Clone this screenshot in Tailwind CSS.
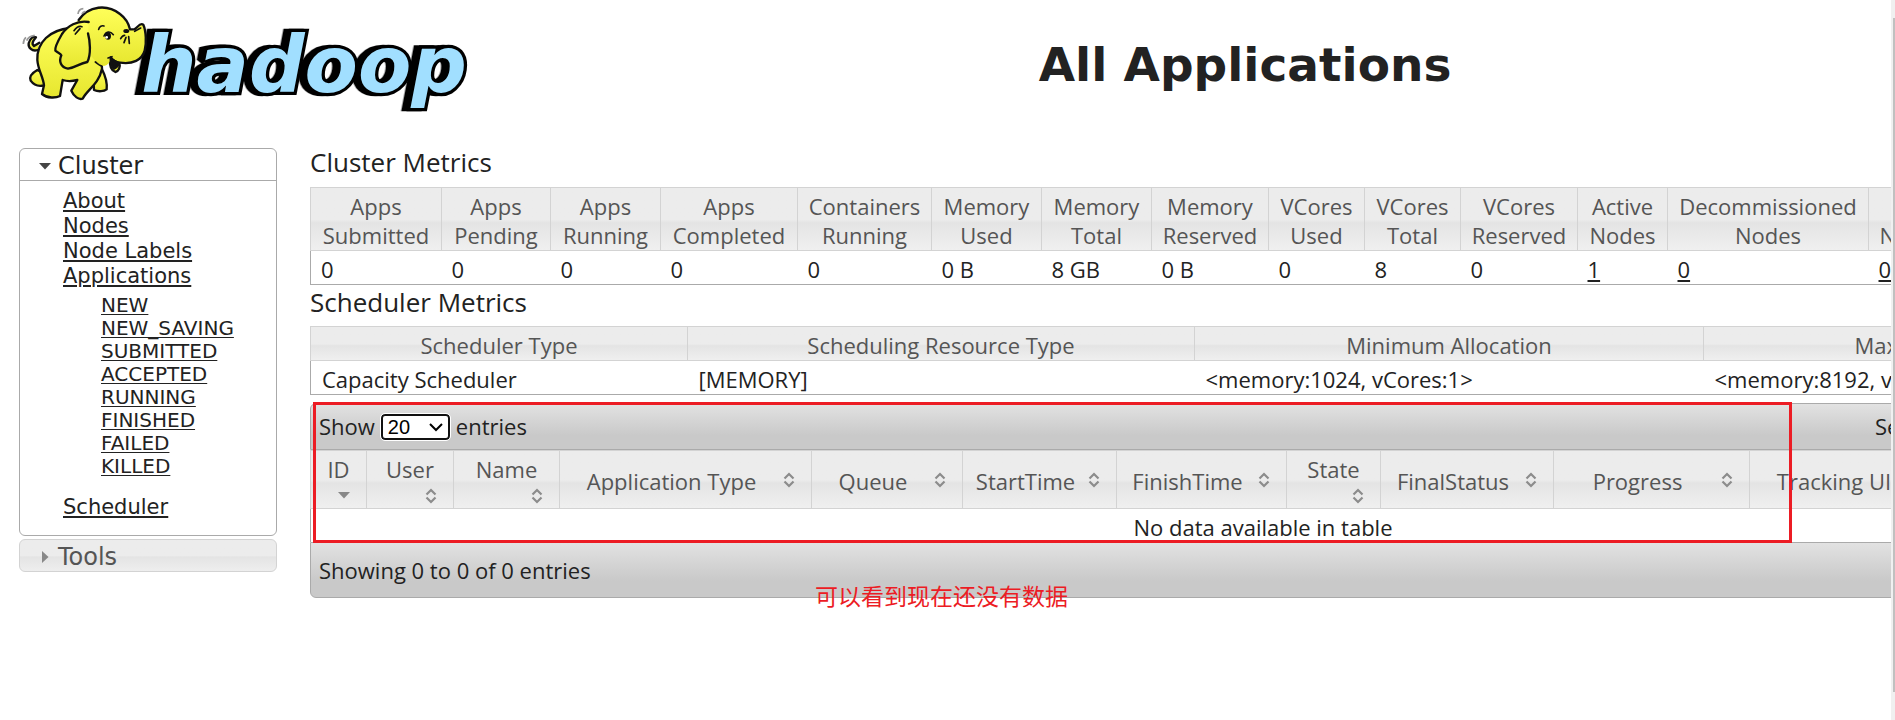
<!DOCTYPE html>
<html lang="en">
<head>
<meta charset="utf-8">
<title>All Applications</title>
<script src="https://cdn.jsdelivr.net/npm/@tailwindcss/browser@4"></script>
</head>
<body class="min-h-screen overflow-x-hidden bg-white text-[#222222] font-['Open_Sans','Noto_Sans_CJK_SC',sans-serif] text-[22px] leading-[29px]">
<svg class="hidden" aria-hidden="true">
  <symbol id="sort" viewBox="0 0 12 16"><path d="M1.500 6.500 6 2 10.500 6.500M1.500 9.500 6 14 10.500 9.500" fill="none" stroke="#8c8c8c" stroke-width="2.200"/></symbol>
  <symbol id="down" viewBox="0 0 12 8"><path d="M0 1H12L6 7.500Z" fill="currentColor"/></symbol>
</svg>
<div class="fixed inset-y-0 right-0 z-20 flex w-1 justify-end bg-[#f0f0f0] pt-[18px] pb-7"><div class="w-[2px] bg-[#c0c0c0]"></div></div>

<header class="flex h-[130px] w-[2216px] items-center">
  <a href="#" class="block w-[480px] shrink-0" aria-label="hadoop">
    <svg class="h-[130px] w-[480px]" viewBox="0 0 1440 390">
      <defs><linearGradient id="skin" x1="0" y1="0" x2="0" y2="1"><stop offset="0" stop-color="#ffff5a"/><stop offset="1" stop-color="#e6e62e"/></linearGradient></defs>
      <text class="drop-shadow-[-16px_0_0_#000000]" x="424" y="277" font-family="DejaVu Sans" font-weight="700" font-style="italic" font-size="233" fill="#a1dfff" stroke="#000" stroke-width="20" stroke-linejoin="miter" stroke-miterlimit="2" paint-order="stroke">hadoop</text>
      <g stroke="#111" stroke-width="7" stroke-linejoin="round" stroke-linecap="round" fill="url(#skin)">
        <path d="M113 150C96 156 84 142 86 130C90 114 100 108 108 112C98 124 94 132 102 138L118 128"/>
        <path d="M112 210C98 218 86 228 92 242C102 256 116 260 132 256L136 222Z"/>
        <path d="M280 230L282 270C296 276 312 274 320 268C322 250 318 232 306 208Z"/>
        <path d="M210 84C150 90 110 126 112 180C114 210 130 232 132 256L126 282C142 296 168 294 180 288L188 240C200 244 216 244 232 240L214 272C222 290 236 300 248 296C262 268 296 254 306 206L300 110Z"/>
        <path d="M330 176C328 200 334 212 346 216C356 214 362 202 358 188Z"/>
        <path d="M236 60C266 16 322 12 360 42C376 54 386 70 390 88L402 88C412 86 418 66 430 74C438 92 440 130 434 152C426 180 398 194 360 188C346 186 338 180 332 172C332 186 324 196 312 198C296 194 282 182 272 164L216 76Z" stroke="none"/>
        <path d="M236 60C266 16 322 12 360 42C376 54 386 70 390 88L402 88C412 86 418 66 430 74C438 92 440 130 434 152C426 180 398 194 360 188C346 186 338 180 332 172" fill="none"/>
        <path d="M332 176C332 192 336 200 342 206C350 202 356 196 356 190Z" fill="#111"/>
        <path d="M324 174 336 170M286 186C294 192 298 196 304 198" fill="none" stroke-width="5"/>
        <path d="M266 66C232 60 202 78 186 102C172 126 164 144 166 152C176 160 182 160 184 166C176 184 182 202 204 206C228 202 238 190 262 186C274 162 270 122 264 100"/>
        <path d="M296 88C298 78 306 76 312 78M312 108C318 94 330 92 340 104M362 116C366 108 370 106 374 106M372 128 378 112M388 130 386 110M404 94 422 84" fill="none" stroke-width="5"/>
        <ellipse cx="324" cy="108" rx="9" ry="11" fill="#111" stroke="none"/>
        <ellipse cx="379" cy="93" rx="9" ry="6" fill="#111" stroke="none"/>
        <circle cx="320" cy="112" r="4" fill="#fff" stroke="none"/>
        <path d="M222 92C230 80 240 78 246 80M226 102 240 86" fill="none" stroke-width="5"/>
      </g>
      <path d="M234 42Q236 26 250 26M246 42Q248 36 256 34M70 132Q70 118 78 112M80 122Q86 108 104 106" fill="none" stroke="#999" stroke-width="5"/>
    </svg>
  </a>
  <h1 class="w-[1530px] text-center font-['DejaVu_Sans',sans-serif] text-[47px] leading-[60px] font-bold">All Applications</h1>
</header>

<div class="flex w-[2216px] items-start gap-[33px] pt-[18px] pl-[19px]">
  <nav class="flex w-[258px] shrink-0 flex-col gap-[3px] font-['DejaVu_Sans',sans-serif]">
    <section class="h-[388px] rounded-md border border-[#aaaaaa]">
      <h3 class="border-b border-[#aaaaaa]"><button class="flex h-[31px] w-full items-center gap-[7px] pt-[2px] pl-[19px] text-[24px] leading-[32px]"><svg class="h-2 w-3 text-[#454545]"><use href="#down"/></svg>Cluster</button></h3>
      <ul class="pt-2 pl-[43px] text-[21px] leading-[25px] underline decoration-2 underline-offset-2">
        <li><a href="#">About</a></li>
        <li><a href="#">Nodes</a></li>
        <li><a href="#">Node Labels</a></li>
        <li><a href="#">Applications</a></li>
      </ul>
      <ul class="pt-[5px] pl-[81px] text-[20px] leading-[23px] underline decoration-1 underline-offset-2">
        <li><a href="#">NEW</a></li>
        <li><a href="#">NEW_SAVING</a></li>
        <li><a href="#">SUBMITTED</a></li>
        <li><a href="#">ACCEPTED</a></li>
        <li><a href="#">RUNNING</a></li>
        <li><a href="#">FINISHED</a></li>
        <li><a href="#">FAILED</a></li>
        <li><a href="#">KILLED</a></li>
      </ul>
      <p class="pt-[17px] pl-[43px] text-[21px] leading-[25px] underline decoration-2 underline-offset-2"><a href="#">Scheduler</a></p>
    </section>
    <h3><button class="flex h-[33px] w-full items-center gap-[7px] rounded-md border border-[#d3d3d3] bg-linear-to-b from-[#ececec] from-50% via-[#e4e4e4] via-55% to-[#eeeeee] pt-[2px] pl-[19px] text-[24px] leading-8 text-[#555555]"><svg class="h-2 w-3 -rotate-90 text-[#888888]"><use href="#down"/></svg>Tools</button></h3>
  </nav>

  <main class="w-[1906px] shrink-0">
    <h3 class="pb-[11px] text-[26px] leading-7">Cluster Metrics</h3>
    <table class="w-full table-fixed border-collapse border border-[#aaaaaa] text-left">
      <colgroup><col class="w-[131px]"><col class="w-[109px]"><col class="w-[110px]"><col class="w-[137px]"><col class="w-[134px]"><col class="w-[110px]"><col class="w-[110px]"><col class="w-[117px]"><col class="w-[96px]"><col class="w-[96px]"><col class="w-[117px]"><col class="w-[90px]"><col class="w-[201px]"><col class="w-[88px]"><col></colgroup>
      <thead class="bg-linear-to-b from-[#ececec] from-50% via-[#e4e4e4] via-55% to-[#f0f0f0] text-center text-[#555555]">
        <tr class="*:border *:border-[#d3d3d3] *:px-0 *:pt-1 *:font-normal">
          <th>Apps<br>Submitted</th><th>Apps<br>Pending</th><th>Apps<br>Running</th><th>Apps<br>Completed</th><th>Containers<br>Running</th><th>Memory<br>Used</th><th>Memory<br>Total</th><th>Memory<br>Reserved</th><th>VCores<br>Used</th><th>VCores<br>Total</th><th>VCores<br>Reserved</th><th>Active<br>Nodes</th><th>Decommissioned<br>Nodes</th><th>Lost<br>Nodes</th><th>Unhealthy<br>Nodes</th>
        </tr>
      </thead>
      <tbody>
        <tr class="*:pt-1 *:pl-[10px]">
          <td>0</td><td>0</td><td>0</td><td>0</td><td>0</td><td>0 B</td><td>8 GB</td><td>0 B</td><td>0</td><td>8</td><td>0</td>
          <td><a href="#" class="underline decoration-2 underline-offset-2">1</a></td><td><a href="#" class="underline decoration-2 underline-offset-2">0</a></td><td><a href="#" class="underline decoration-2 underline-offset-2">0</a></td><td><a href="#" class="underline decoration-2 underline-offset-2">0</a></td>
        </tr>
      </tbody>
    </table>

    <h3 class="pt-[3px] pb-[10px] text-[26px] leading-7">Scheduler Metrics</h3>
    <table class="w-full table-fixed border-collapse border border-[#aaaaaa] text-left">
      <colgroup><col class="w-[377px]"><col class="w-[507px]"><col class="w-[509px]"><col></colgroup>
      <thead class="bg-linear-to-b from-[#ececec] from-50% via-[#e4e4e4] via-55% to-[#f0f0f0] text-center text-[#555555]">
        <tr class="*:border *:border-[#d3d3d3] *:px-0 *:pt-1 *:font-normal"><th>Scheduler Type</th><th>Scheduling Resource Type</th><th>Minimum Allocation</th><th>Maximum Allocation</th></tr>
      </thead>
      <tbody>
        <tr class="*:pt-1 *:pl-[11px]"><td>Capacity Scheduler</td><td>[MEMORY]</td><td>&lt;memory:1024, vCores:1&gt;</td><td>&lt;memory:8192, vCores:8&gt;</td></tr>
      </tbody>
    </table>

    <div class="relative mt-2">
      <div class="flex h-[47px] items-center justify-between rounded-t-md border border-[#aaaaaa] bg-linear-to-b from-[#e2e2e2] to-[#c9c9c9] to-70% px-2">
        <label class="flex items-center gap-[6px]">Show
          <select class="h-[26px] w-[69px] appearance-none rounded-sm border-2 border-[#111111] bg-white bg-[url('data:image/svg+xml,%3Csvg%20xmlns=%22http://www.w3.org/2000/svg%22%20viewBox=%220%200%2014%2010%22%3E%3Cpath%20d=%22M1%202l6%206%206-6%22%20fill=%22none%22%20stroke=%22black%22%20stroke-width=%222%22/%3E%3C/svg%3E')] bg-[length:14px_10px] bg-[position:right_5px_center] bg-no-repeat pl-[5px] font-['Liberation_Sans',sans-serif] text-[20px] leading-5 text-black outline-1 outline-white"><option>20</option><option>40</option></select>
          entries</label>
        <label class="flex w-[332px] items-center gap-2">Search:<input type="text" class="h-7 w-60 border border-[#888888] bg-white"></label>
      </div>
      <table class="w-full table-fixed border-collapse border-x border-[#aaaaaa]">
        <colgroup><col class="w-[56px]"><col class="w-[87px]"><col class="w-[106px]"><col class="w-[252px]"><col class="w-[151px]"><col class="w-[154px]"><col class="w-[170px]"><col class="w-[94px]"><col class="w-[173px]"><col class="w-[196px]"><col class="w-[197px]"><col></colgroup>
        <thead class="bg-linear-to-b from-[#ececec] from-50% via-[#e4e4e4] via-55% to-[#f0f0f0] text-[#555555]">
          <tr class="h-[58px] *:border *:border-[#d3d3d3] *:p-0 *:font-normal">
            <th><button class="flex w-full flex-col items-center pt-1"><span>ID</span><svg class="mt-[7px] mr-4 mb-[9px] h-2 w-3 self-end text-[#888888]"><use href="#down"/></svg></button></th>
            <th><button class="flex w-full flex-col items-center pt-1"><span>User</span><svg class="mt-1 mr-4 mb-1 h-4 w-3 self-end"><use href="#sort"/></svg></button></th>
            <th><button class="flex w-full flex-col items-center pt-1"><span>Name</span><svg class="mt-1 mr-4 mb-1 h-4 w-3 self-end"><use href="#sort"/></svg></button></th>
            <th><button class="flex w-full items-center pt-1 pr-4"><span class="flex-1">Application Type</span><svg class="mb-1 h-4 w-3"><use href="#sort"/></svg></button></th>
            <th><button class="flex w-full items-center pt-1 pr-4"><span class="flex-1">Queue</span><svg class="mb-1 h-4 w-3"><use href="#sort"/></svg></button></th>
            <th><button class="flex w-full items-center pt-1 pr-4"><span class="flex-1">StartTime</span><svg class="mb-1 h-4 w-3"><use href="#sort"/></svg></button></th>
            <th><button class="flex w-full items-center pt-1 pr-4"><span class="flex-1">FinishTime</span><svg class="mb-1 h-4 w-3"><use href="#sort"/></svg></button></th>
            <th><button class="flex w-full flex-col items-center pt-1"><span>State</span><svg class="mt-1 mr-4 mb-1 h-4 w-3 self-end"><use href="#sort"/></svg></button></th>
            <th><button class="flex w-full items-center pt-1 pr-4"><span class="flex-1">FinalStatus</span><svg class="mb-1 h-4 w-3"><use href="#sort"/></svg></button></th>
            <th><button class="flex w-full items-center pt-1 pr-4"><span class="flex-1">Progress</span><svg class="mb-1 h-4 w-3"><use href="#sort"/></svg></button></th>
            <th><button class="flex w-full items-center pt-1 pr-4"><span class="flex-1">Tracking UI</span><svg class="mb-1 h-4 w-3"><use href="#sort"/></svg></button></th>
            <th></th>
          </tr>
        </thead>
        <tbody><tr><td colspan="12" class="pt-1 text-center">No data available in table</td></tr></tbody>
      </table>
      <div class="flex h-[56px] items-center rounded-b-md border border-[#aaaaaa] bg-linear-to-b from-[#e2e2e2] to-[#c9c9c9] to-70% px-2">Showing 0 to 0 of 0 entries</div>
      <div class="pointer-events-none absolute -top-px left-[3px] h-[141px] w-[1479px] border-3 border-[#ec1c24]"></div>
      <p class="absolute top-[178px] left-[505px] font-['Noto_Sans_CJK_SC',sans-serif] text-[23px] text-[#ec1c24]">可以看到现在还没有数据</p>
    </div>
  </main>
</div>
</body>
</html>
